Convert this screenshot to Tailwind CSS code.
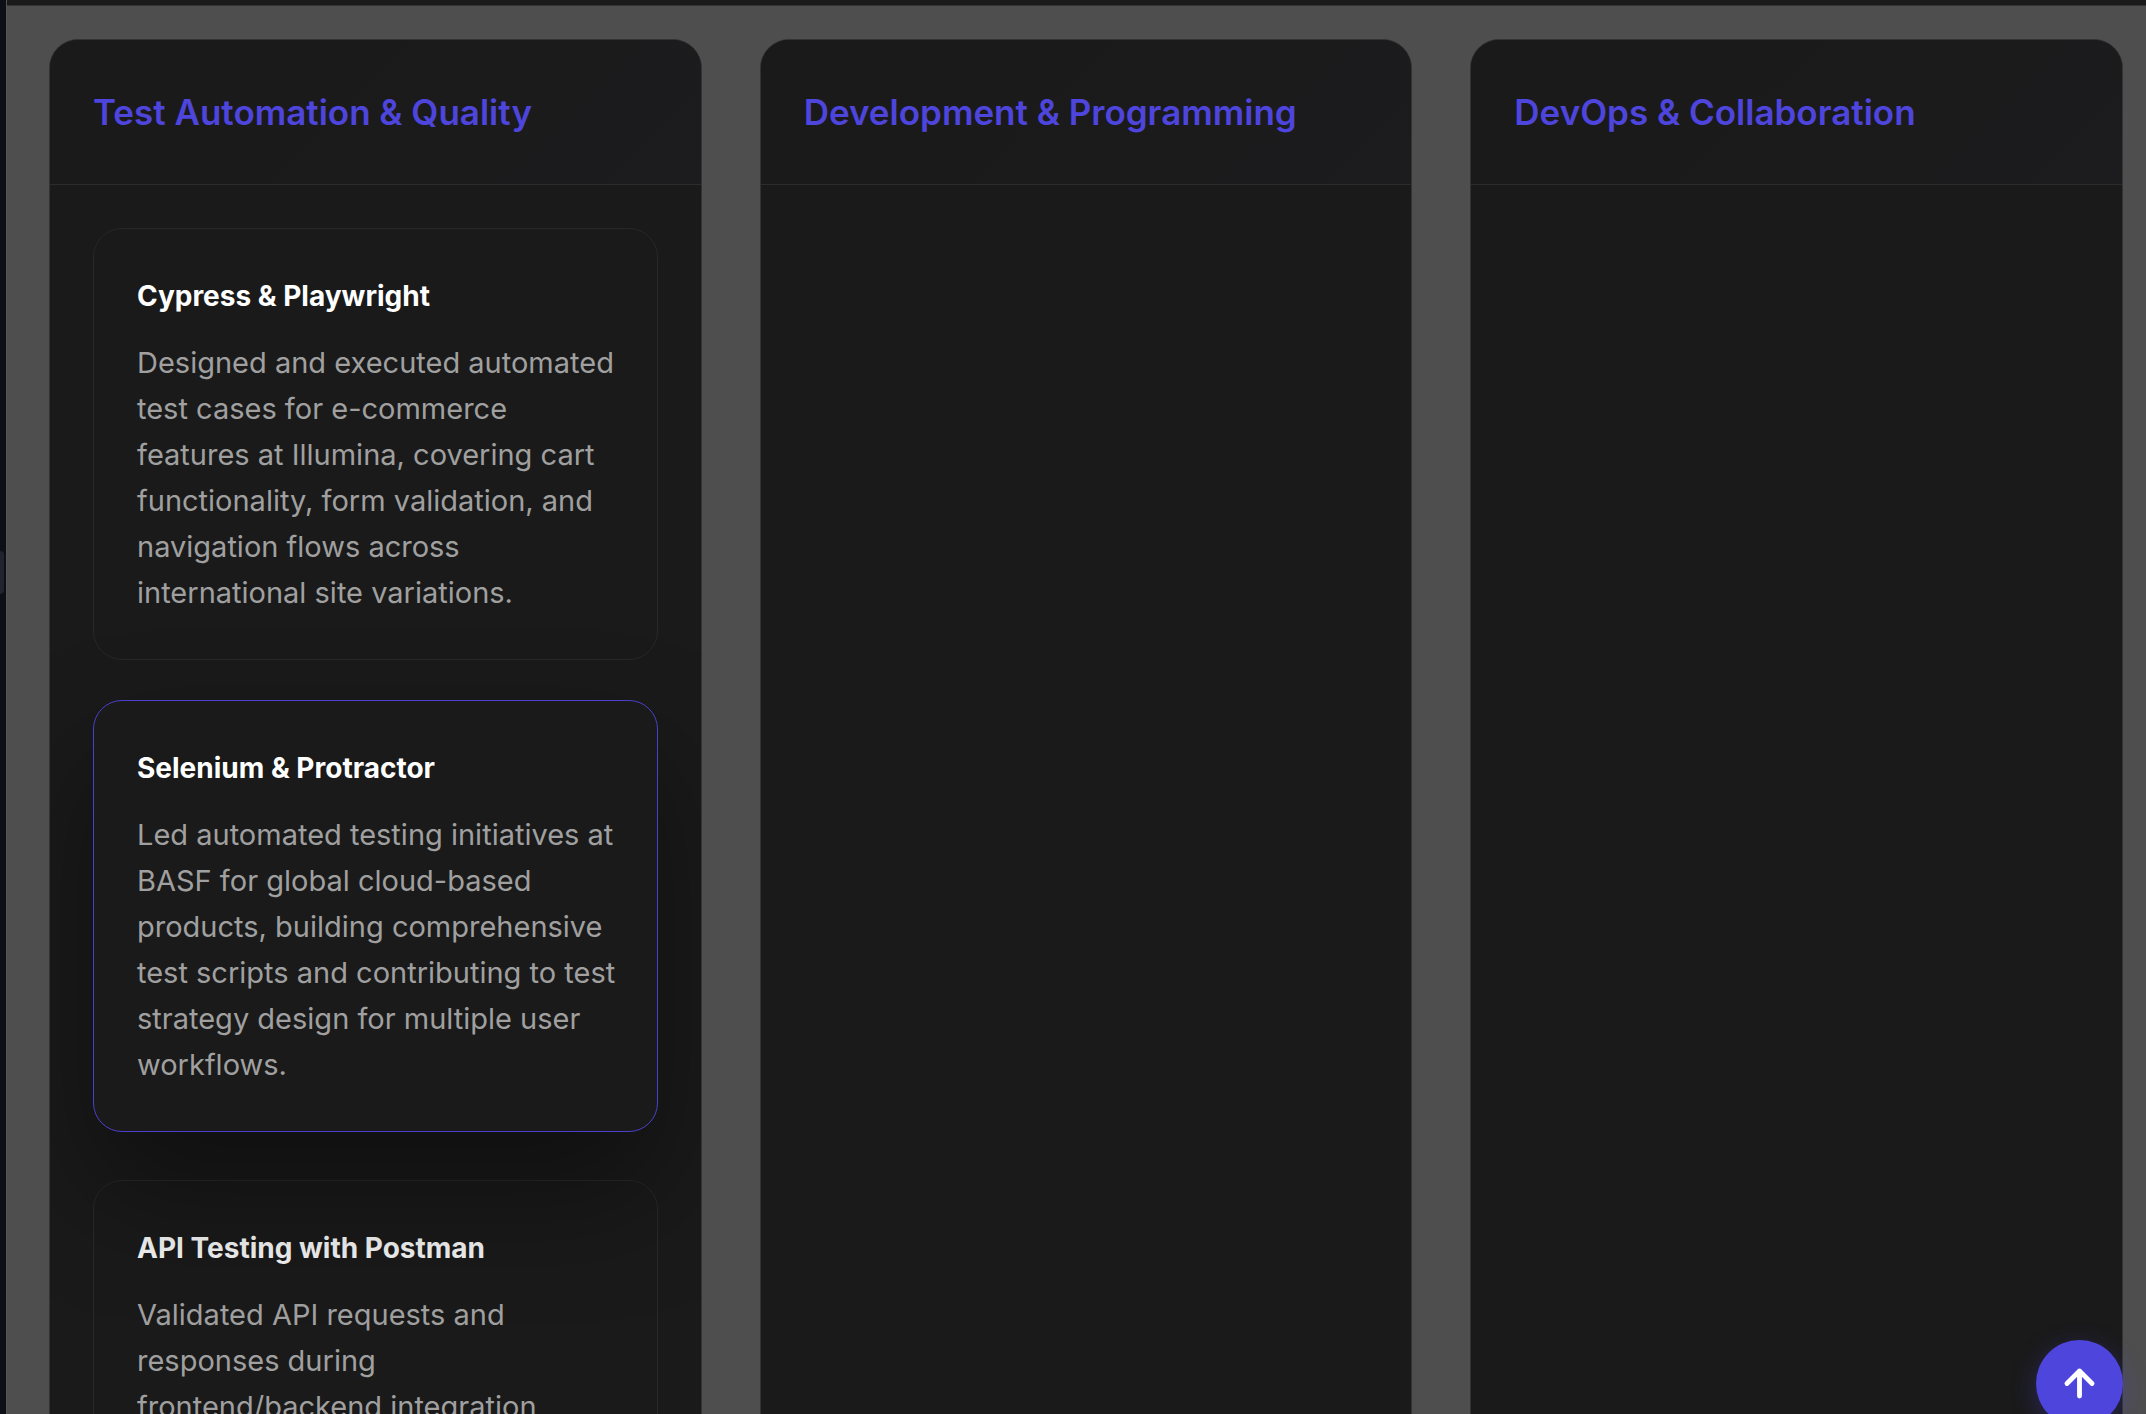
<!DOCTYPE html>
<html lang="en">
<head>
<meta charset="utf-8">
<meta name="viewport" content="width=device-width, initial-scale=1">
<title>Skills</title>
<script src="https://cdn.jsdelivr.net/npm/@tailwindcss/browser@4"></script>
</head>
<body class="flex h-screen overflow-hidden bg-[#4e4e4e] font-['Inter',sans-serif]">
  <aside class="flex w-[6px] shrink-0 flex-col justify-center bg-[#0e0f14]">
    <div class="mb-[270px] h-[43px] w-1 rounded-r-sm bg-[#23232e]"></div>
  </aside>
  <div class="flex min-w-0 flex-1 flex-col border-l border-[#555]">
    <header class="h-[6px] shrink-0 border-b border-[#333] bg-[#1a1a1a]"></header>
    <main class="grid min-h-0 flex-1 grid-cols-3 gap-[58px] pt-[33px] pr-[23px] pl-[42px]">

      <section class="min-h-[1600px] overflow-hidden rounded-[29px] border border-[#333] bg-[#1a1a1a]">
        <div class="border-b border-[#2c2c2c] bg-linear-135 from-[#1a1a1a] from-30% to-[#1c1c1e] p-[43px]">
          <h2 class="text-[35px] leading-[58px] font-semibold whitespace-nowrap text-[#4e45dd]">Test Automation &amp; Quality</h2>
        </div>
        <div class="flex flex-col gap-[44px] p-[43px]">
          <article class="rounded-[29px] border border-[#282828] bg-[#1a1a1a] py-[43px] pr-9 pl-[43px]">
            <h3 class="mb-5 text-[28px] leading-[48px] font-bold text-white">Cypress &amp; Playwright</h3>
            <p class="text-[29px] leading-[46px] text-[#a0a0a0]">Designed and executed automated test cases for e-commerce features at Illumina, covering cart functionality, form validation, and navigation flows across international site variations.</p>
          </article>
          <article class="-translate-y-1 rounded-[29px] border border-[#4a40cc] bg-[#1a1a1a] py-[43px] pr-9 pl-[43px] shadow-[0_60px_120px_rgba(0,0,0,0.4)]">
            <h3 class="mb-5 text-[28px] leading-[48px] font-bold text-white">Selenium &amp; Protractor</h3>
            <p class="text-[29px] leading-[46px] text-[#a0a0a0]">Led automated testing initiatives at BASF for global cloud-based products, building comprehensive test scripts and contributing to test strategy design for multiple user workflows.</p>
          </article>
          <article class="min-h-[432px] rounded-[29px] border border-[#282828] bg-[#1a1a1a] py-[43px] pr-9 pl-[43px]">
            <h3 class="mb-5 text-[28px] leading-[48px] font-bold text-[#f4f4f4]">API Testing with Postman</h3>
            <p class="text-[29px] leading-[46px] text-[#a0a0a0]">Validated API requests and responses during frontend/backend integration</p>
          </article>
        </div>
      </section>

      <section class="min-h-[1600px] overflow-hidden rounded-[29px] border border-[#333] bg-[#1a1a1a]">
        <div class="border-b border-[#2c2c2c] bg-linear-135 from-[#1a1a1a] from-30% to-[#1c1c1e] p-[43px]">
          <h2 class="text-[35px] leading-[58px] font-semibold whitespace-nowrap text-[#4e45dd]">Development &amp; Programming</h2>
        </div>
      </section>

      <section class="min-h-[1600px] overflow-hidden rounded-[29px] border border-[#333] bg-[#1a1a1a]">
        <div class="border-b border-[#2c2c2c] bg-linear-135 from-[#1a1a1a] from-30% to-[#1c1c1e] p-[43px]">
          <h2 class="text-[35px] leading-[58px] font-semibold whitespace-nowrap text-[#4e45dd]">DevOps &amp; Collaboration</h2>
        </div>
      </section>
    </main>
  </div>

  <button type="button" aria-label="Back to top" class="fixed right-[23px] -bottom-[13px] flex size-[87px] items-center justify-center rounded-full bg-[#4e45dd] text-white shadow-[0_7px_27px_rgba(79,70,229,0.3)]">
    <svg class="size-[43px]" viewBox="0 0 24 24" fill="none" stroke="currentColor" stroke-width="2.7" stroke-linecap="round" stroke-linejoin="round" aria-hidden="true"><path d="M12 19V5M5 12l7-7 7 7"/></svg>
  </button>
</body>
</html>
